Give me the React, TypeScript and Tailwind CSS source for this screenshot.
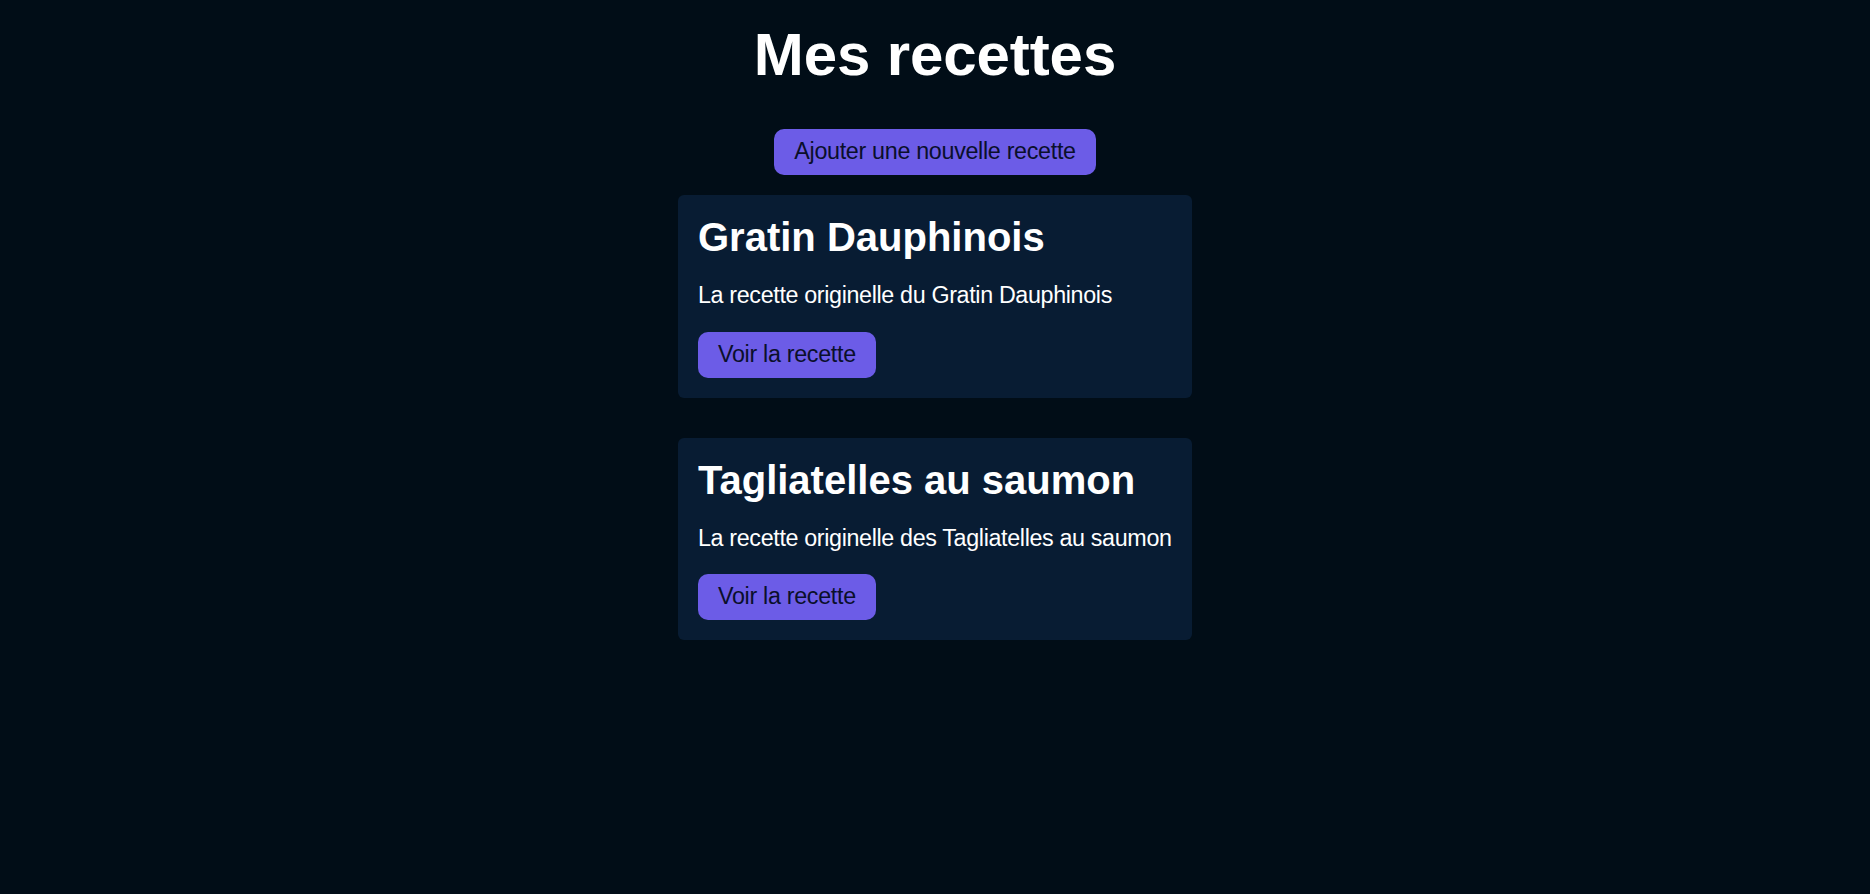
const recipes = [
  { title: "Gratin Dauphinois", description: "La recette originelle du Gratin Dauphinois" },
  { title: "Tagliatelles au saumon", description: "La recette originelle des Tagliatelles au saumon" },
];

function Button({ children }: { children: string }) {
  return (
    <button className="block h-[46px] rounded-[10px] bg-[#6c5ce7] px-5 pb-px text-[23.3px] leading-[45px] tracking-[-0.31px] text-[#0a0f2b]">
      {children}
    </button>
  );
}

export default function App() {
  return (
    <main className="flex min-h-screen flex-col items-center bg-[#010d17] font-['Liberation_Sans',Arial,sans-serif] text-white">
      <h1 className="mt-5 mb-10 text-[60px] leading-[69px] font-bold tracking-[-0.1px]">Mes recettes</h1>
      <Button>Ajouter une nouvelle recette</Button>
      <div className="mt-5 flex w-[514px] flex-col gap-10">
        {recipes.map((recipe) => (
          <article key={recipe.title} className="flex flex-col items-start rounded-[6px] bg-[#081c33] p-5">
            <h2 className="-mt-px text-[40px] leading-[46px] font-bold">{recipe.title}</h2>
            <p className="mt-[22px] mb-[22.5px] text-[23.3px] leading-[27px] tracking-[-0.35px] whitespace-nowrap">{recipe.description}</p>
            <Button>Voir la recette</Button>
          </article>
        ))}
      </div>
    </main>
  );
}
